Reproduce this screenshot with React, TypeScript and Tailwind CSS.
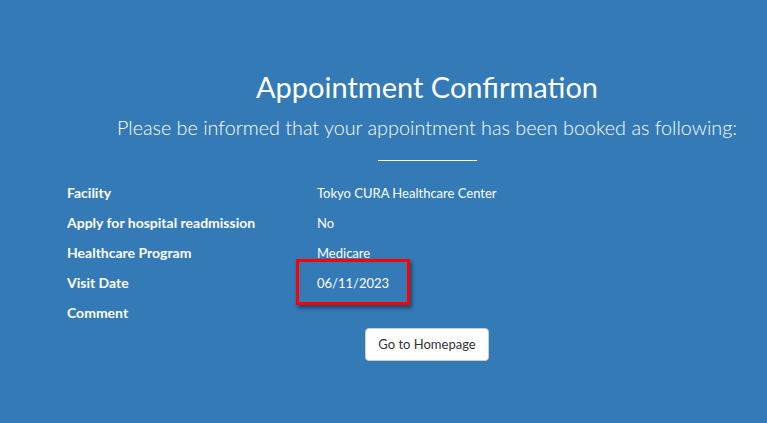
export default function App() {
  const rows = [
    { label: "Facility", value: "Tokyo CURA Healthcare Center" },
    { label: "Apply for hospital readmission", value: "No" },
    { label: "Healthcare Program", value: "Medicare" },
    { label: "Visit Date", value: "06/11/2023", mark: true },
    { label: "Comment", value: "" },
  ];

  return (
    <div
      className="w-[767px] h-[423px] overflow-hidden bg-[#337ab7] text-white"
      style={{ fontFamily: "Lato, 'Open Sans', sans-serif" }}
    >
      <div className="pl-[87px] pt-[69px] flex flex-col items-center">
        <h1 className="text-[29px] leading-[36px] font-normal whitespace-nowrap">
          Appointment Confirmation
        </h1>
        <p className="mt-[9px] text-[19.8px] leading-[26px] font-light whitespace-nowrap">
          Please be informed that your appointment has been booked as following:
        </p>
        <hr className="mt-[20px] w-[99px] border-0 border-t border-white" />
      </div>

      <div className="mt-[17px] pl-[67px] flex flex-col">
        {rows.map((r) => (
          <div key={r.label} className="flex h-[30px] items-center leading-[20px]">
            <div className="w-[250px] font-bold text-[14px]">{r.label}</div>
            <div className="relative text-[13px]">
              {r.value}
              {r.mark && (
                <span className="absolute left-[-21px] top-[-14px] w-[114px] h-[46px] border-[3px] border-[#ff0000] shadow-[2px_3px_4px_rgba(0,0,0,0.45)]" />
              )}
            </div>
          </div>
        ))}
      </div>

      <div className="pl-[87px] flex justify-center">
        <button className="h-[33px] px-[12px] bg-white text-[#333] text-[13px] rounded-[4px] border border-[#ccc]">
          Go to Homepage
        </button>
      </div>
    </div>
  );
}
